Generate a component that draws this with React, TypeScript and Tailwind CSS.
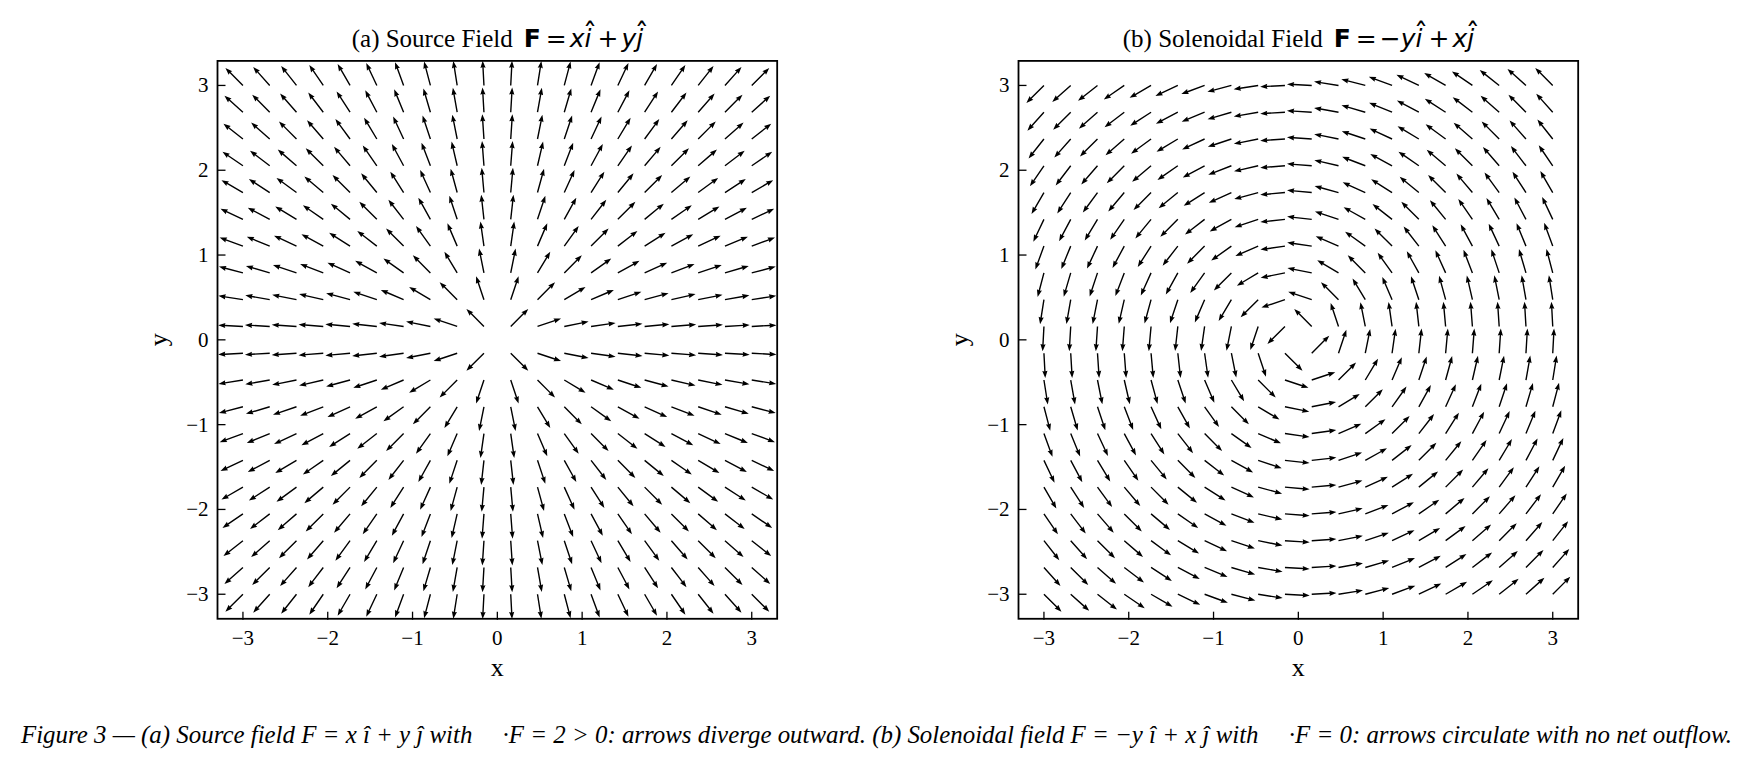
import React from 'react';

const PPU = 84.8;
const BOX_X = 217.5;
const BOX_W = 6.6 * PPU;
const CX = BOX_X + 3.3 * PPU;
const CY = 3.3 * PPU;
const GRID = Array.from({ length: 20 }, (_, i) => -3 + (6 * i) / 19);
const TICKS = [-3, -2, -1, 0, 1, 2, 3];
const SERIF = "'Liberation Serif', 'Times New Roman', serif";

// one arrow, drawn along +x from its tail
const ARROW = '0,-0.7 18.2,-0.7 17.6,-2.6 24.8,0 17.6,2.6 18.2,0.7 0,0.7';

type Field = (x: number, y: number) => [number, number];

const fmt = (t: number) => (t < 0 ? `\u2212${-t}` : `${t}`);

const Hat: React.FC<{ ch: string }> = ({ ch }) => (
  <span className="relative inline-block">
    {ch}
    <span className="absolute left-[calc(50%+2px)] -translate-x-1/2 top-[-6px] text-[29px] leading-[29px] not-italic font-normal">
      ˆ
    </span>
  </span>
);

const Quiver: React.FC<{ id: string; field: Field }> = ({ id, field }) => {
  const arrows: React.ReactNode[] = [];
  GRID.forEach((gy, j) => {
    GRID.forEach((gx, i) => {
      const [u, v] = field(gx, gy);
      const deg = (Math.atan2(-v, u) * 180) / Math.PI;
      const px = CX + gx * PPU;
      const py = CY - gy * PPU;
      arrows.push(
        <polygon key={`${i}-${j}`} points={ARROW} fill="#000" transform={`translate(${px} ${py}) rotate(${deg})`} />
      );
    });
  });

  return (
    <svg width={801} height={640} className="block">
      <defs>
        <clipPath id={id}>
          <rect x={BOX_X} y={0} width={BOX_W} height={BOX_W} />
        </clipPath>
      </defs>
      <g clipPath={`url(#${id})`}>{arrows}</g>
      <rect x={BOX_X} y={0.9} width={BOX_W} height={BOX_W - 1.8} fill="none" stroke="#000" strokeWidth={1.8} />
      {TICKS.map((t) => (
        <g key={t}>
          <line x1={CX + t * PPU} x2={CX + t * PPU} y1={BOX_W} y2={BOX_W - 8} stroke="#000" strokeWidth={1.3} />
          <line x1={BOX_X} x2={BOX_X + 8} y1={CY - t * PPU} y2={CY - t * PPU} stroke="#000" strokeWidth={1.3} />
          <text x={CX + t * PPU} y={584.5} textAnchor="middle" fontFamily={SERIF} fontSize={21} fill="#000">
            {fmt(t)}
          </text>
          <text x={208.5} y={CY - t * PPU + 7} textAnchor="end" fontFamily={SERIF} fontSize={21} fill="#000">
            {fmt(t)}
          </text>
        </g>
      ))}
      <text x={CX} y={616} textAnchor="middle" fontFamily={SERIF} fontSize={26} fill="#000">
        x
      </text>
      <text transform={`translate(167 ${CY}) rotate(-90)`} textAnchor="middle" fontFamily={SERIF} fontSize={26} fill="#000">
        y
      </text>
    </svg>
  );
};

const Panel: React.FC<{ label: string; math: React.ReactNode; id: string; field: Field }> = ({ label, math, id, field }) => (
  <div className="w-[801px] shrink-0 flex flex-col">
    <div className="h-[60px] pt-[26px] pl-[217.5px]">
      <div className="w-[560px] text-center leading-[25px] text-black whitespace-nowrap">
        <span className="text-[25px] font-['Liberation_Serif','Times_New_Roman',serif]">{label}</span>
        <span className="inline-block w-[11px]" />
        <span className="text-[25px] font-['DejaVu_Sans',sans-serif]">{math}</span>
      </div>
    </div>
    <Quiver id={id} field={field} />
  </div>
);

const mathA = (
  <>
    <span className="font-bold">F</span>
    <span className="ml-[5px] mr-[3px]">=</span>
    <span className="italic">x</span>
    <span className="italic">
      <Hat ch="i" />
    </span>
    <span className="ml-[6px] mr-[3px]">+</span>
    <span className="italic">y</span>
    <span className="italic">
      <Hat ch="j" />
    </span>
  </>
);

const mathB = (
  <>
    <span className="font-bold">F</span>
    <span className="ml-[5px] mr-[3px]">=</span>
    <span>−</span>
    <span className="italic">y</span>
    <span className="italic">
      <Hat ch="i" />
    </span>
    <span className="ml-[6px] mr-[3px]">+</span>
    <span className="italic">x</span>
    <span className="italic">
      <Hat ch="j" />
    </span>
  </>
);

const unit = (u: number, v: number): [number, number] => {
  const n = Math.hypot(u, v) || 1;
  return [u / n, v / n];
};

export default function App() {
  return (
    <div className="w-[1751px] h-[768px] bg-white overflow-hidden flex flex-col">
      <div className="flex">
        <Panel label="(a) Source Field" math={mathA} id="clipA" field={(x, y) => unit(x, y)} />
        <Panel label="(b) Solenoidal Field" math={mathB} id="clipB" field={(x, y) => unit(-y, x)} />
      </div>
      <p className="mt-[22px] pl-[21px] text-[24.9px] leading-[25px] italic text-black whitespace-nowrap font-['Liberation_Serif','Times_New_Roman',serif]">
        Figure 3 — (a) Source field F = x î + y ĵ with <span className="inline-block w-[24px]" />·F = 2 &gt; 0: arrows
        diverge outward. (b) Solenoidal field F = −y î + x ĵ with <span className="inline-block w-[24px]" />·F = 0:
        arrows circulate with no net outflow.
      </p>
    </div>
  );
}
